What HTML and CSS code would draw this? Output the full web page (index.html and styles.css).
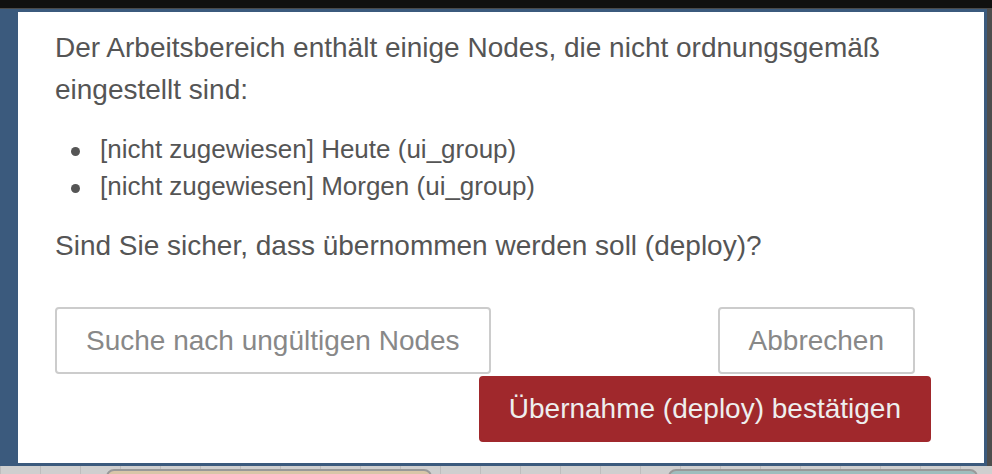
FILE: index.html
```html
<!DOCTYPE html>
<html lang="de">
  <head>
    <meta charset="UTF-8" />
    <meta name="viewport" content="width=device-width, initial-scale=1.0" />
    <title>Deploy bestätigen</title>
    <link rel="stylesheet" href="styles.css">
  </head>
  <body>
    <div class="topbar"></div>
    <div class="workspace">
      <div class="frame">
        <div class="dialog">
          <div class="dialog-body">
            <p class="message">
              Der Arbeitsbereich enthält einige Nodes, die nicht ordnungsgemäß
              eingestellt sind:
            </p>
            <ul class="node-list">
              <li>[nicht zugewiesen] Heute (ui_group)</li>
              <li>[nicht zugewiesen] Morgen (ui_group)</li>
            </ul>
            <p class="question">
              Sind Sie sicher, dass übernommen werden soll (deploy)?
            </p>
          </div>
          <div class="actions">
            <button type="button" class="btn btn-search">Suche nach ungültigen Nodes</button>
            <button type="button" class="btn btn-cancel">Abbrechen</button>
            <button type="button" class="btn btn-primary">
              Übernahme (deploy) bestätigen
            </button>
          </div>
        </div>
      </div>
      <div class="edge"></div>
    </div>
    <div class="canvas">
      <div class="node node-tan"></div>
      <div class="node node-teal"></div>
    </div>
  </body>
</html>
```

FILE: styles.css
```css
body {
  margin: 0;
  height: 474px;
  overflow: hidden;
  background: #474747;
  font-family: "Liberation Sans", Arial, sans-serif;
}

.topbar {
  height: 8px;
  background: #101010;
  border-bottom: 1px solid #4a4a4a;
}

.workspace {
  display: flex;
  height: 457px;
}

.frame {
  display: flex;
  width: 987px;
  box-sizing: border-box;
  padding: 3px 3px 3px 18px;
  background: #3b5a7d;
}

.edge {
  flex: 1;
  background: #4d4d4d;
}

.dialog {
  flex: 1;
  background: #fff;
  padding: 15px 53px 0 37px;
  color: #555;
}

.dialog-body {
  font-size: 28px;
}

.message {
  margin: 0;
  line-height: 42px;
}

.node-list {
  margin: 20px 0 0;
  padding-left: 45px;
  font-size: 26px;
  line-height: 37px;
  list-style: none;
}

.node-list li::before {
  content: "";
  display: inline-block;
  width: 9px;
  height: 9px;
  margin: 0 20px 0 -29px;
  border-radius: 50%;
  background: #555;
  vertical-align: middle;
}

.question {
  margin: 20px 0 0;
  line-height: 42px;
}

.actions {
  display: grid;
  grid-template-columns: auto 1fr;
  row-gap: 2px;
  margin-top: 40px;
}

.btn {
  height: 67px;
  padding: 0 29px;
  font-family: inherit;
  font-size: 28px;
  white-space: nowrap;
  color: #888;
  background: #fff;
  border: 2px solid #ccc;
  border-radius: 4px;
}

.btn-search {
  grid-column: 1;
  grid-row: 1;
}

.btn-cancel {
  grid-column: 2;
  grid-row: 1;
  justify-self: end;
  margin-right: 16px;
}

.btn-primary {
  grid-column: 1 / -1;
  grid-row: 2;
  justify-self: end;
  height: 66px;
  padding: 0 28px;
  color: #eee;
  background: #a0282c;
  border-color: #a0282c;
}

.canvas {
  position: relative;
  height: 8px;
  background-color: #cfcfcf;
  background-image: linear-gradient(90deg, #bdbdbd 1px, transparent 1px);
  background-size: 40px 8px;
}

.node {
  position: absolute;
  top: 3px;
  height: 20px;
  border: 2px solid #999;
  border-radius: 8px;
}

.node-tan {
  left: 106px;
  width: 322px;
  background: #d9c6a8;
}

.node-teal {
  left: 668px;
  width: 306px;
  background: #9fbdbd;
}
```
